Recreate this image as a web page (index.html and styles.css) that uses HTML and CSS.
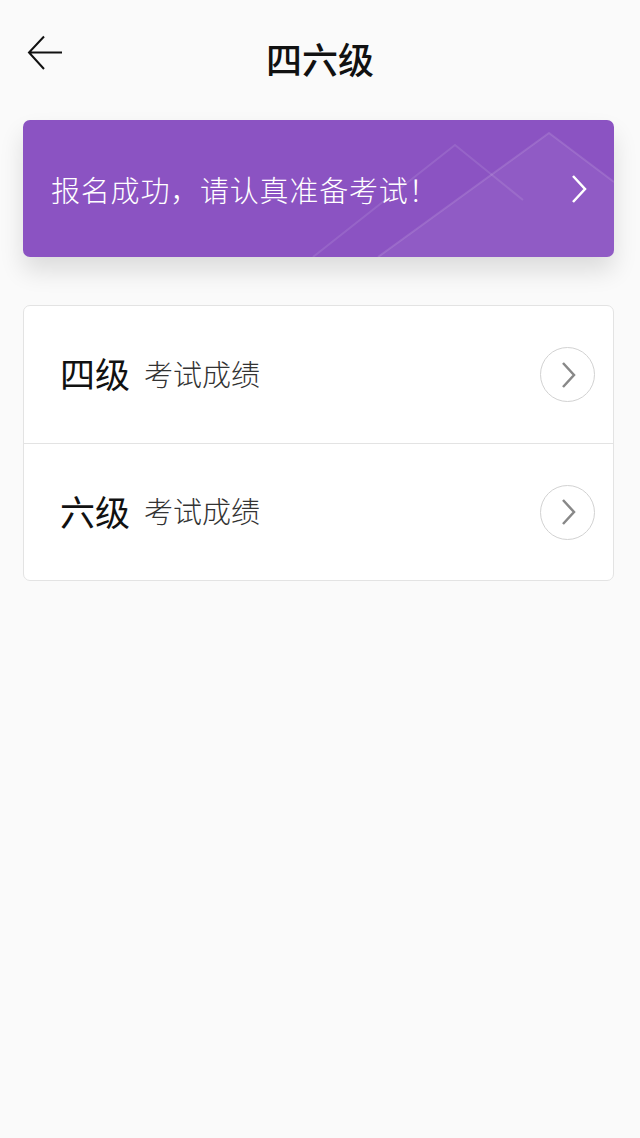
FILE: index.html
```html
<!DOCTYPE html>
<html lang="zh-CN">
<head>
<meta charset="UTF-8">
<meta name="viewport" content="width=device-width, initial-scale=1.0">
<title>四六级</title>
<link rel="stylesheet" href="styles.css">
</head>
<body>

<div class="header">
    <a class="back" href="#">
        <svg width="36" height="36" viewBox="0 0 36 36">
            <path d="M35 17.5 H2 M17 1.5 L2 17.5 L17 34" fill="none" stroke="#111" stroke-width="2"/>
        </svg>
    </a>
    <h1>四六级</h1>
</div>

<div class="banner">
    <svg class="banner-deco" width="591" height="137" viewBox="0 0 591 137">
        <path d="M290 137 L432 25 L500 80" fill="none" stroke="#ffffff" stroke-opacity="0.10" stroke-width="2"/>
        <path d="M355 137 L526 13 L591 62" fill="none" stroke="#ffffff" stroke-opacity="0.12" stroke-width="2"/>
        <path d="M355 137 L526 13 L591 62 L591 137 Z" fill="#ffffff" fill-opacity="0.05"/>
    </svg>
    <span class="banner-text">报名成功，请认真准备考试！</span>
    <svg class="banner-arrow" width="18" height="30" viewBox="0 0 18 30">
        <path d="M3 2 L15 15 L3 28" fill="none" stroke="#fff" stroke-width="2.5"/>
    </svg>
</div>

<div class="list">
    <div class="row">
        <span class="level">四级</span>
        <span class="sub">考试成绩</span>
        <span class="go">
            <svg width="20" height="30" viewBox="0 0 20 30">
                <path d="M5 3 L16 15 L5 27" fill="none" stroke="#888" stroke-width="2.5"/>
            </svg>
        </span>
    </div>
    <div class="row">
        <span class="level">六级</span>
        <span class="sub">考试成绩</span>
        <span class="go">
            <svg width="20" height="30" viewBox="0 0 20 30">
                <path d="M5 3 L16 15 L5 27" fill="none" stroke="#888" stroke-width="2.5"/>
            </svg>
        </span>
    </div>
</div>

</body>
</html>
```

FILE: styles.css
```css
body {
    margin: 0;
    padding: 0;
    background: #fafafa;
    font-family: "Noto Sans CJK SC", "Noto Sans", sans-serif;
    color: #111;
}

.header {
    height: 110px;
    display: flex;
    align-items: center;
    justify-content: center;
    position: relative;
}

.back {
    position: absolute;
    left: 27px;
    top: 35px;
    display: block;
    width: 36px;
    height: 36px;
}

h1 {
    margin: 0;
    font-size: 36px;
    font-weight: 500;
    color: #111;
    padding-top: 6px;
}

.banner {
    margin: 10px 26px 0 23px;
    height: 137px;
    border-radius: 7px;
    background: #8b53c2;
    box-shadow: 0 14px 24px rgba(0, 0, 0, 0.12);
    display: flex;
    align-items: center;
    padding: 0 26px 0 28px;
    position: relative;
    overflow: hidden;
}

.banner-deco {
    position: absolute;
    left: 0;
    top: 0;
}

.banner-text {
    flex: 1;
    color: #fff;
    font-size: 29px;
    font-weight: 300;
    letter-spacing: 0.8px;
    position: relative;
}

.banner-arrow {
    position: relative;
}

.list {
    margin: 48px 26px 0 23px;
    background: #fff;
    border: 1px solid #e3e3e3;
    border-radius: 7px;
}

.row {
    height: 137px;
    display: flex;
    align-items: center;
    padding: 0 18px 0 36px;
    box-sizing: border-box;
}

.row + .row {
    border-top: 1px solid #e3e3e3;
}

.level {
    font-size: 35px;
    color: #111;
    margin-top: -4px;
}

.sub {
    font-size: 29px;
    font-weight: 300;
    color: #333;
    margin: -4px 0 0 14px;
    flex: 1;
}

.go {
    width: 53px;
    height: 53px;
    border: 1px solid #d2d2d2;
    border-radius: 50%;
    display: flex;
    align-items: center;
    justify-content: center;
}
```
